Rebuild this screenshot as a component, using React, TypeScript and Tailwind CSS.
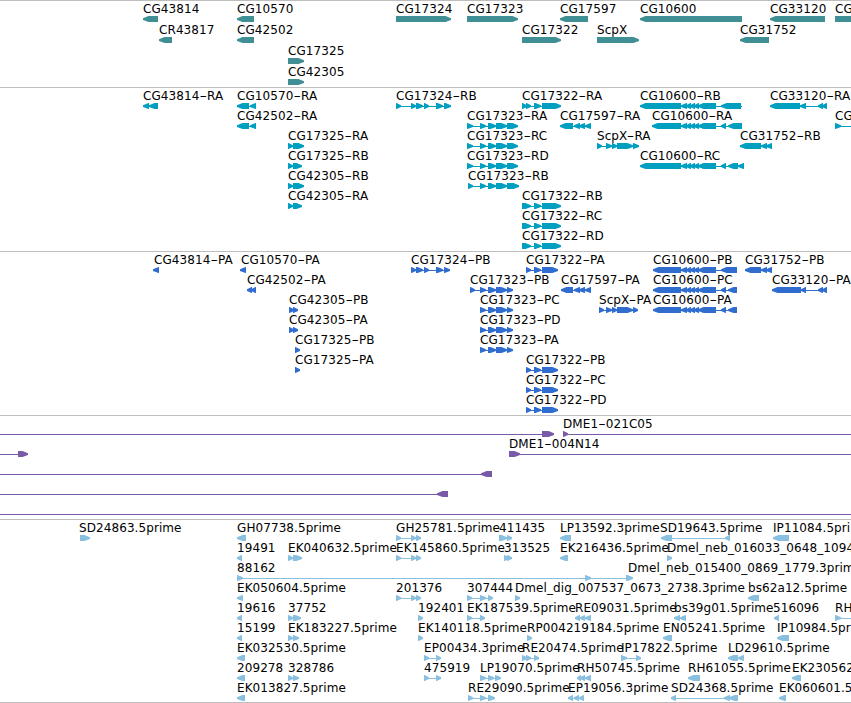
import React from "react";

type Span = [number, number];

interface Feature {
  row: number;
  dir: "left" | "right";
  exons: Span[];
  label?: string;
  labelX?: number;
  // full extent of the intron line, when it runs past the exons
  line?: Span;
}

interface TrackData {
  id: string;
  color: string;
  height: number;
  step: number;
  features: Feature[];
}

const VIEW_WIDTH = 851;

const right = (row: number, label: string, exons: Span[], extra: Partial<Feature> = {}): Feature => ({
  row,
  dir: "right",
  label,
  exons,
  ...extra,
});

const left = (row: number, label: string, exons: Span[], extra: Partial<Feature> = {}): Feature => ({
  row,
  dir: "left",
  label,
  exons,
  ...extra,
});

// exon groups shared by several transcripts
const cg10600Mid: Span[] = [[681, 687], [686, 691], [690, 695], [694, 699], [698, 716]];
const cg17323: Span[] = [[480, 486], [488, 496], [496, 507]];
const cg17322Tail: Span[] = [[534, 541], [542, 561]];
const cg17322Cds: Span[] = [[526, 531], [534, 541], [542, 558]];
const cg17597Tail: Span[] = [[574, 580], [579, 585], [585, 591]];
const cg17324Est: Span[] = [[396, 401], [411, 416], [416, 421]];

const tracks: TrackData[] = [
  {
    id: "genes",
    color: "#408f94",
    height: 86,
    step: 21,
    features: [
      left(0, "CG43814", [[143, 158]]),
      left(0, "CG10570", [[237, 254]]),
      right(0, "CG17324", [[396, 451]]),
      right(0, "CG17323", [[467, 518]]),
      left(0, "CG17597", [[560, 588]]),
      left(0, "CG10600", [[640, 742]]),
      left(0, "CG33120", [[770, 825]]),
      right(0, "CG", [[835, 870]]),
      left(1, "CR43817", [[159, 172]]),
      left(1, "CG42502", [[237, 254]]),
      right(1, "CG17322", [[522, 561]]),
      right(1, "ScpX", [[597, 639]]),
      left(1, "CG31752", [[740, 769]]),
      right(2, "CG17325", [[288, 304]]),
      right(3, "CG42305", [[288, 304]]),
    ],
  },
  {
    id: "transcripts",
    color: "#009fc0",
    height: 163,
    step: 20,
    features: [
      left(0, "CG43814-RA", [[143, 149], [149, 158]]),
      left(0, "CG10570-RA", [[237, 249], [250, 256]]),
      right(0, "CG17324-RB", [[396, 401], [411, 416], [416, 423], [424, 429], [436, 443], [444, 451]]),
      right(0, "CG17322-RA", [[522, 527], [526, 531], ...cg17322Tail]),
      left(0, "CG10600-RB", [[640, 681], ...cg10600Mid, [721, 741]], { line: [640, 742] }),
      left(0, "CG33120-RA", [[770, 800], [800, 806], [818, 823], [822, 827]]),
      left(1, "CG42502-RA", [[237, 249], [250, 256]]),
      right(1, "CG17323-RA", [[467, 473], ...cg17323, [507, 518]]),
      left(1, "CG17597-RA", [[560, 573], ...cg17597Tail]),
      left(1, "CG10600-RA", [[652, 681], ...cg10600Mid, [721, 726], [728, 742]]),
      right(1, "CG", [[835, 841]], { line: [835, 851] }),
      right(2, "CG17325-RA", [[288, 293], [293, 304]]),
      right(2, "CG17323-RC", [[467, 473], ...cg17323, [507, 518]]),
      right(2, "ScpX-RA", [[597, 602], [606, 612], [612, 617], [617, 633], [633, 639]]),
      left(2, "CG31752-RB", [[740, 761], [761, 767], [766, 772]]),
      right(3, "CG17325-RB", [[288, 293], [293, 302]]),
      right(3, "CG17323-RD", [[467, 473], ...cg17323, [507, 518]]),
      left(3, "CG10600-RC", [[640, 681], ...cg10600Mid, [721, 726], [728, 738], [738, 744]]),
      right(4, "CG42305-RB", [[288, 293], [293, 304]]),
      right(4, "CG17323-RB", [[468, 473], ...cg17323, [507, 519]]),
      right(5, "CG42305-RA", [[288, 293], [293, 302]]),
      right(5, "CG17322-RB", [[522, 531], ...cg17322Tail]),
      right(6, "CG17322-RC", [[522, 531], ...cg17322Tail]),
      right(7, "CG17322-RD", [[522, 531], ...cg17322Tail]),
    ],
  },
  {
    id: "proteins",
    color: "#306dcf",
    height: 163,
    step: 20,
    features: [
      left(0, "CG43814-PA", [[153, 159]], { labelX: 154 }),
      left(0, "CG10570-PA", [[240, 246]], { labelX: 241 }),
      right(0, "CG17324-PB", [[411, 416], [416, 423], [424, 429], [436, 443], [444, 450]]),
      right(0, "CG17322-PA", cg17322Cds),
      left(0, "CG10600-PB", [[653, 681], ...cg10600Mid, [721, 737]]),
      left(0, "CG31752-PB", [[745, 761], [761, 767], [766, 772]]),
      left(1, "CG42502-PA", [[247, 252], [251, 256]]),
      right(1, "CG17323-PB", [[470, 475], ...cg17323, [507, 513]]),
      left(1, "CG17597-PA", [[561, 573], ...cg17597Tail]),
      left(1, "CG10600-PC", [[653, 681], ...cg10600Mid, [721, 726], [728, 737]]),
      left(1, "CG33120-PA", [[772, 801], [801, 806], [818, 823], [822, 827]]),
      right(2, "CG42305-PB", [[289, 294], [293, 298]]),
      right(2, "CG17323-PC", [...cg17323, [507, 513]]),
      right(2, "ScpX-PA", [[599, 604], [606, 612], [612, 617], [617, 633], [633, 638]]),
      left(2, "CG10600-PA", [[653, 681], ...cg10600Mid, [721, 726], [728, 737]]),
      right(3, "CG42305-PA", [[289, 294], [293, 298]]),
      right(3, "CG17323-PD", [...cg17323, [507, 513]]),
      right(4, "CG17325-PB", [[295, 300]]),
      right(4, "CG17323-PA", [...cg17323, [507, 513]]),
      right(5, "CG17325-PA", [[295, 300]]),
      right(5, "CG17322-PB", cg17322Cds),
      right(6, "CG17322-PC", cg17322Cds),
      right(7, "CG17322-PD", cg17322Cds),
    ],
  },
  {
    id: "bacs",
    color: "#785aa8",
    height: 103,
    step: 20,
    features: [
      { row: 0, dir: "right", exons: [[542, 554]], line: [0, 554] },
      right(0, "DME1-021C05", [[563, 568]], { line: [563, 851] }),
      { row: 1, dir: "right", exons: [[18, 28]], line: [0, 28] },
      right(1, "DME1-004N14", [[509, 520]], { line: [509, 851] }),
      { row: 2, dir: "left", exons: [[481, 492]], line: [0, 492] },
      { row: 3, dir: "left", exons: [[437, 448]], line: [0, 448] },
      { row: 4, dir: "right", exons: [], line: [0, 851] },
    ],
  },
  {
    id: "ests",
    color: "#89bfdf",
    height: 182,
    step: 20,
    features: [
      right(0, "SD24863.5prime", [[80, 90]], { labelX: 79 }),
      left(0, "GH07738.5prime", [[237, 246]]),
      right(0, "GH25781.5prime", cg17324Est),
      right(0, "411435", [[499, 507], [507, 512]]),
      left(0, "LP13592.3prime", [[560, 571]]),
      left(0, "SD19643.5prime", [[661, 672], [725, 730]], { labelX: 660 }),
      left(0, "IP11084.5prime", [[773, 789]]),
      left(1, "19491", [[237, 242]]),
      right(1, "EK040632.5prime", [[288, 293], [293, 302]]),
      right(1, "EK145860.5prime", cg17324Est),
      right(1, "313525", [[504, 509], [507, 512]]),
      left(1, "EK216436.5prime", [[560, 568]]),
      right(1, "Dmel_neb_016033_0648_1094", [[667, 672]]),
      right(2, "88162", [[237, 243], [585, 591], [626, 633]]),
      { row: 2, dir: "right", exons: [], label: "Dmel_neb_015400_0869_1779.3prime", labelX: 628 },
      left(3, "EK050604.5prime", [[237, 243]]),
      right(3, "201376", cg17324Est),
      right(3, "307444", [[467, 472], [480, 486], [488, 493]]),
      right(3, "Dmel_dig_007537_0673_2738.3prime", [[515, 520]]),
      left(3, "bs62a12.5prime", [[748, 759]]),
      left(4, "19616", [[237, 242]]),
      right(4, "37752", [[288, 293], [293, 301]]),
      right(4, "192401", [[418, 423]]),
      right(4, "EK187539.5prime", [[467, 472], [480, 485]]),
      left(4, "RE09031.5prime", [[575, 580], [580, 585], [585, 591]]),
      left(4, "bs39g01.5prime", [[674, 680], [680, 686]]),
      left(4, "516096", [[774, 779]], { labelX: 773 }),
      right(4, "RH", [[835, 841]], { line: [835, 851] }),
      left(5, "15199", [[237, 242]]),
      right(5, "EK183227.5prime", [[288, 293], [293, 299]]),
      right(5, "EK140118.5prime", [[418, 423]]),
      right(5, "RP004219184.5prime", [[527, 532]]),
      left(5, "EN05241.5prime", [[663, 672]]),
      left(5, "IP10984.5prime", [[777, 789]]),
      left(6, "EK032530.5prime", [[237, 245]]),
      right(6, "EP00434.3prime", [[424, 429], [436, 441]]),
      right(6, "RE20474.5prime", [[522, 527], [526, 531], [534, 539]]),
      right(6, "IP17822.5prime", [[621, 627], [636, 641]]),
      left(6, "LD29610.5prime", [[728, 738], [738, 744]]),
      left(7, "209278", [[237, 245]]),
      right(7, "328786", [[288, 293], [293, 299]]),
      right(7, "475919", [[424, 429], [436, 441]]),
      right(7, "LP19070.5prime", [[480, 486], [488, 494], [495, 501]]),
      left(7, "RH50745.5prime", [[577, 581], [580, 585], [585, 591]]),
      left(7, "RH61055.5prime", [[688, 700]]),
      left(7, "EK230562", [[792, 801]]),
      left(8, "EK013827.5prime", [[237, 245]]),
      right(8, "RE29090.5prime", [[468, 473], [480, 486], [488, 495]]),
      left(8, "EP19056.3prime", [[568, 573], [574, 579], [579, 584]]),
      left(8, "SD24368.5prime", [[671, 676], [724, 730], [729, 738]]),
      left(8, "EK060601.5prime", [[779, 786]]),
    ],
  },
];

// block with a tapered, slightly blunt head on the strand side
function exonPoints([start, end]: Span, dir: Feature["dir"], top: number) {
  const head = Math.min(end - start, 6) - 0.5;
  const upper = top + 2.3;
  const lower = top + 3.9;
  const bottom = top + 6;
  if (dir === "left") {
    const neck = start + head;
    return `${start},${upper} ${neck},${top} ${end},${top} ${end},${bottom} ${neck},${bottom} ${start},${lower}`;
  }
  const neck = end - head;
  return `${start},${top} ${neck},${top} ${end},${upper} ${end},${lower} ${neck},${bottom} ${start},${bottom}`;
}

function LabelText({ label }: { label: string }) {
  const [name, suffix] = label.split("-");
  if (suffix === undefined) return <>{label}</>;
  return (
    <>
      {name}
      <tspan textLength={7.6} lengthAdjust="spacingAndGlyphs">-</tspan>
      {suffix}
    </>
  );
}

function FeatureGlyph({ feature, step }: { feature: Feature; step: number }) {
  const { row, dir, exons, label, line } = feature;
  const y = row * step;
  const start = line ? line[0] : exons[0]?.[0];
  const end = line ? line[1] : exons[exons.length - 1]?.[1];
  const hasLine = line !== undefined || exons.length > 1;

  return (
    <g>
      {hasLine && <rect x={start} y={y + 18} width={end - start} height={1} />}
      {exons.map((exon, i) => (
        <polygon key={i} points={exonPoints(exon, dir, y + 15)} />
      ))}
      {label && (
        <text className="fill-black" x={feature.labelX ?? start} y={y + 12}>
          <LabelText label={label} />
        </text>
      )}
    </g>
  );
}

function Track({ track }: { track: TrackData }) {
  return (
    <section className="border-t border-[#bdbdbd]">
      <svg
        className="block overflow-hidden font-['DejaVu_Sans',sans-serif] text-[12px] tracking-[0.08px]"
        width={VIEW_WIDTH}
        height={track.height}
        fill={track.color}
      >
        {track.features.map((feature, i) => (
          <FeatureGlyph key={i} feature={feature} step={track.step} />
        ))}
      </svg>
    </section>
  );
}

export default function App() {
  return (
    <main className="flex h-[703px] w-[851px] flex-col overflow-hidden border-b border-[#bdbdbd] bg-white">
      {tracks.map((track) => (
        <Track key={track.id} track={track} />
      ))}
    </main>
  );
}
